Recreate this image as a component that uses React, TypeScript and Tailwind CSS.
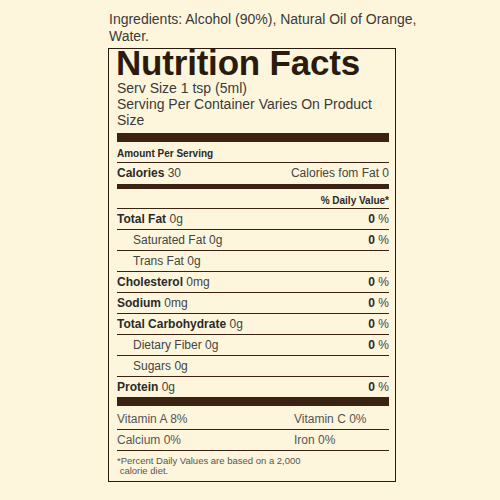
import React from 'react';

type NutrientRow = {
  label: string;
  amount: string;
  pct?: string;
  sub?: boolean;
  last?: boolean;
};

const rows: NutrientRow[] = [
  { label: 'Total Fat', amount: '0g', pct: '0' },
  { label: 'Saturated Fat', amount: '0g', pct: '0', sub: true },
  { label: 'Trans Fat', amount: '0g', sub: true },
  { label: 'Cholesterol', amount: '0mg', pct: '0' },
  { label: 'Sodium', amount: '0mg', pct: '0' },
  { label: 'Total Carbohydrate', amount: '0g', pct: '0' },
  { label: 'Dietary Fiber', amount: '0g', pct: '0', sub: true },
  { label: 'Sugars', amount: '0g', sub: true },
  { label: 'Protein', amount: '0g', pct: '0', last: true },
];

function Row({ row }: { row: NutrientRow }) {
  return (
    <div
      className={
        'flex justify-between text-[12px] leading-[20px] text-[#444] ' +
        (row.last ? 'h-[20px]' : 'h-[21px] border-b border-[#3b2314]') +
        (row.sub ? ' pl-[16px]' : '')
      }
    >
      <span>
        {/* sub rows are not bold */}
        {row.sub ? (
          <span>{row.label} </span>
        ) : (
          <span className="font-bold text-[#2a2a2a]">{row.label} </span>
        )}
        {row.amount}
      </span>
      {row.pct && (
        <span>
          <span className="font-bold text-[#2a2a2a]">{row.pct}</span> %
        </span>
      )}
    </div>
  );
}

export default function App() {
  return (
    <div className="w-[500px] h-[500px] bg-[#fdf6dc] font-['Liberation_Sans',Arial,sans-serif]">
      <div className="pl-[108px] pt-[11px]">
        {/* Ingredients */}
        <p className="w-[330px] pl-[1px] text-[14px] leading-[17px] text-[#3a3a3a]">
          Ingredients: Alcohol (90%), Natural Oil of Orange, Water.
        </p>

        {/* Label box */}
        <div className="mt-[3px] w-[288px] border border-[#2b1b0d] pl-[8px] pr-[6px]">
          <h1 className="-ml-[1px] text-[35px] leading-[28px] font-bold text-[#2b1b0d] tracking-[-0.2px]">
            Nutrition Facts
          </h1>
          <div className="mt-[3px] text-[14px] leading-[16px] text-[#3a3a3a]">
            <div>Serv Size 1 tsp (5ml)</div>
            <div>Serving Per Container Varies On Product Size</div>
          </div>

          <div className="mt-[5px] h-[9px] bg-[#3b2314]" />

          <div className="pt-[4px] h-[21px] leading-[16px] text-[10px] font-bold text-[#2a2a2a] border-b border-[#3b2314]">
            Amount Per Serving
          </div>

          <div className="flex justify-between h-[21px] leading-[21px] text-[12px] text-[#444]">
            <span>
              <span className="font-bold text-[#2a2a2a]">Calories</span> 30
            </span>
            <span>Calories fom Fat 0</span>
          </div>

          <div className="h-[5px] bg-[#3b2314]" />

          <div className="pt-[4px] h-[20px] leading-[15px] text-[10px] font-bold text-[#2a2a2a] text-right border-b border-[#3b2314]">
            % Daily Value*
          </div>

          {rows.map((r) => (
            <Row key={r.label} row={r} />
          ))}

          <div className="h-[9px] bg-[#3b2314]" />

          <div className="grid grid-cols-[177px_1fr] pt-[3px] h-[24px] leading-[20px] text-[12px] text-[#555] border-b border-[#3b2314]">
            <span>Vitamin A 8%</span>
            <span>Vitamin C 0%</span>
          </div>
          <div className="grid grid-cols-[177px_1fr] h-[21px] leading-[20px] text-[12px] text-[#555] border-b border-[#3b2314]">
            <span>Calcium 0%</span>
            <span>Iron 0%</span>
          </div>

          <div className="pt-[5px] pb-[5px] text-[9.5px] leading-[10px] text-[#555] whitespace-pre">
            {'*Percent Daily Values are based on a 2,000\n calorie diet.'}
          </div>
        </div>
      </div>
    </div>
  );
}
